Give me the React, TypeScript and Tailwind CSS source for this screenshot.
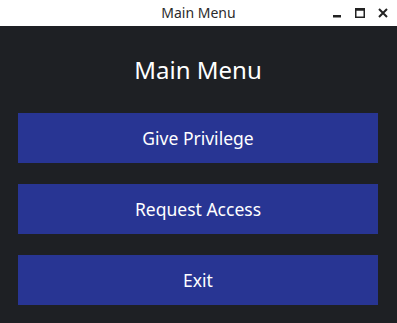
export default function App() {
  const items = ["Give Privilege", "Request Access", "Exit"];
  return (
    <div className="w-[397px] h-[323px] flex flex-col bg-[#1e2024] font-['Noto_Sans',sans-serif]">
      <div className="relative h-[26px] bg-white flex items-center justify-center">
        <span className="text-[14px] text-[#2b2b2b] leading-none">Main Menu</span>
        <div className="absolute right-[9px] top-0 h-full flex items-center gap-[13px]">
          <svg width="10" height="10" viewBox="0 0 10 10">
            <rect x="1" y="7" width="8" height="2.5" fill="#222" />
          </svg>
          <svg width="10" height="10" viewBox="0 0 10 10">
            <rect x="0.75" y="0.75" width="8.5" height="8.5" fill="none" stroke="#222" strokeWidth="1.5" />
            <rect x="0.75" y="0.75" width="8.5" height="2" fill="#222" />
          </svg>
          <svg width="10" height="10" viewBox="0 0 10 10">
            <path d="M1 1 L9 9 M9 1 L1 9" stroke="#222" strokeWidth="2" />
          </svg>
        </div>
      </div>
      <div className="flex flex-col items-center pl-[18px] pr-[19px] pt-[28px]">
        <h1 className="text-[24px] leading-[32px] text-white">Main Menu</h1>
        <div className="mt-[27px] w-full flex flex-col gap-[21px]">
          {items.map((t) => (
            <button
              key={t}
              className="h-[50px] w-full bg-[#283593] text-white text-[17.5px] flex items-center justify-center"
            >
              {t}
            </button>
          ))}
        </div>
      </div>
    </div>
  );
}
